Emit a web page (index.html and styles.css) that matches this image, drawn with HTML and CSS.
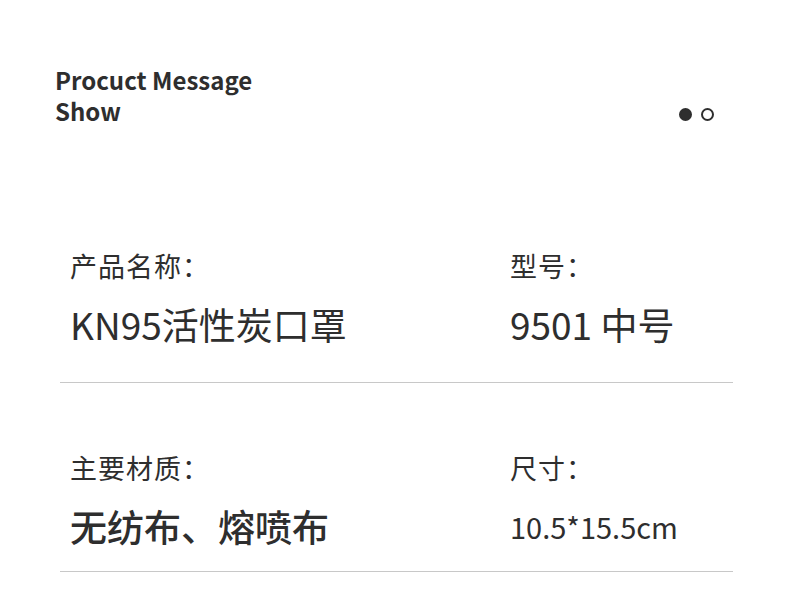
FILE: index.html
```html
<!DOCTYPE html>
<html lang="zh-CN">
<head>
    <meta charset="UTF-8">
    <title>Procuct Message Show</title>
    <link rel="stylesheet" href="styles.css">
</head>
<body>
    <div class="page">
        <div class="header">
            <h1 class="title">Procuct Message<br>Show</h1>
            <div class="dots">
                <span class="dot active"></span>
                <span class="dot"></span>
            </div>
        </div>

        <div class="info">
            <div class="row">
                <div class="cell">
                    <div class="label">产品名称：</div>
                    <div class="value">KN95活性炭口罩</div>
                </div>
                <div class="cell right">
                    <div class="label">型号：</div>
                    <div class="value">9501 中号</div>
                </div>
            </div>
            <div class="row last">
                <div class="cell">
                    <div class="label">主要材质：</div>
                    <div class="value strong">无纺布、熔喷布</div>
                </div>
                <div class="cell right">
                    <div class="label">尺寸：</div>
                    <div class="value small">10.5*15.5cm</div>
                </div>
            </div>
        </div>
    </div>
</body>
</html>
```

FILE: styles.css
```css
:root {
    --text-color: #2e2e2e;
    --line-color: #c8c8c8;
}

body {
    margin: 0;
    background: #ffffff;
    color: var(--text-color);
    font-family: "Noto Sans CJK SC", "Noto Sans", sans-serif;
}

.page {
    width: 790px;
    height: 606px;
    overflow: hidden;
}

.header {
    display: flex;
    justify-content: space-between;
    align-items: flex-end;
    padding: 64px 76px 0 55px;
}

.title {
    margin: 0;
    font-size: 24px;
    font-weight: 700;
    line-height: 31px;
}

.dots {
    display: flex;
    gap: 9px;
    align-items: center;
    padding-bottom: 5px;
}

.dot {
    width: 9px;
    height: 9px;
    border: 2px solid var(--text-color);
    border-radius: 50%;
}

.dot.active {
    background: var(--text-color);
}

.info {
    margin: 0 57px 0 60px;
    padding-top: 120px;
}

.row {
    display: flex;
    border-bottom: 1px solid var(--line-color);
    padding: 0 0 34px 10px;
}

.row + .row {
    padding-top: 65px;
}

.row.last {
    padding-bottom: 21px;
}

.cell {
    width: 440px;
}

.cell.right {
    width: auto;
}

.label {
    font-size: 27px;
    line-height: 40px;
    letter-spacing: 1px;
}

.value {
    font-size: 37px;
    line-height: 48px;
    margin-top: 14px;
}

.value.strong {
    font-weight: 500;
}

.value.small {
    font-size: 29px;
}
```
